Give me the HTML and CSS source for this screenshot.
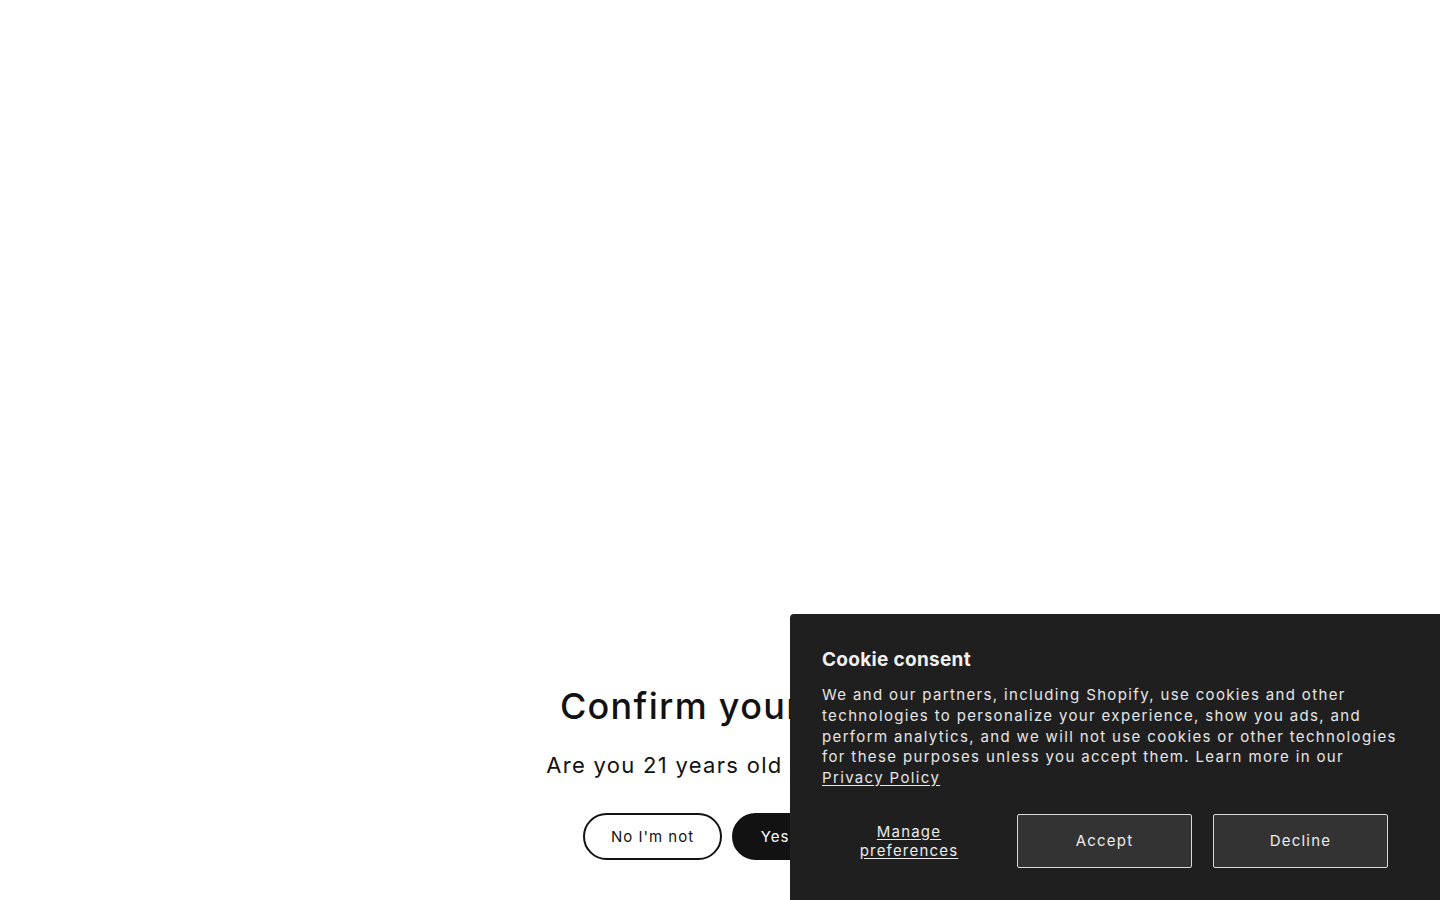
FILE: index.html
```html
<!DOCTYPE html>
<html lang="en">
<head>
<meta charset="utf-8">
<title>Confirm your age</title>
<link rel="stylesheet" href="styles.css">
</head>
<body>
<main class="page">
  <section class="age">
    <h1 class="age-title">Confirm your age</h1>
    <p class="age-text">Are you 21 years old or older?</p>
    <div class="age-actions">
      <button class="pill pill-outline">No I'm not</button>
      <button class="pill pill-solid">Yes I am</button>
    </div>
  </section>
</main>
<aside class="cookie">
  <h2 class="cookie-title">Cookie consent</h2>
  <p class="cookie-text">We and our partners, including Shopify, use cookies and other technologies to personalize your experience, show you ads, and perform analytics, and we will not use cookies or other technologies for these purposes unless you accept them. Learn more in our <a href="#" class="cookie-link">Privacy Policy</a></p>
  <div class="cookie-actions">
    <a href="#" class="manage">Manage<br>preferences</a>
    <button class="cbtn">Accept</button>
    <button class="cbtn">Decline</button>
  </div>
</aside>
</body>
</html>
```
FILE: styles.css
```css
* { box-sizing: border-box; }
html, body { margin: 0; padding: 0; }
body {
  width: 1440px;
  height: 900px;
  overflow: hidden;
  background: #ffffff;
  font-family: Inter, "Liberation Sans", sans-serif;
  color: #121212;
}
.page {
  display: flex;
  justify-content: center;
  padding-top: 682px;
}
.age {
  display: flex;
  flex-direction: column;
  align-items: center;
}
.age-title {
  margin: 0;
  font-size: 36px;
  font-weight: 500;
  line-height: 48px;
  letter-spacing: 1.3px;
}
.age-text {
  margin: 20px 0 0;
  font-size: 22px;
  line-height: 30px;
  letter-spacing: 1.3px;
}
.age-actions {
  display: flex;
  gap: 10px;
  margin-top: 33px;
}
.pill {
  height: 47px;
  border-radius: 24px;
  font-family: inherit;
  font-size: 15px;
  letter-spacing: 1px;
  padding: 0;
  white-space: nowrap;
}
.pill-outline {
  width: 139px;
  background: #fff;
  color: #121212;
  border: 2px solid #121212;
}
.pill-solid {
  width: 125px;
  background: #121212;
  color: #fff;
  border: 2px solid #121212;
}
.cookie {
  position: fixed;
  right: 0;
  bottom: 0;
  width: 650px;
  height: 286px;
  background: #1f1f1f;
  color: #ececec;
  padding: 33px 32px 32px;
  border-radius: 4px 0 0 0;
}
.cookie-title {
  margin: 0;
  font-size: 19px;
  font-weight: 700;
  line-height: 26px;
  letter-spacing: 0.3px;
  color: #f0f0f0;
}
.cookie-text {
  margin: 12px 0 0;
  font-size: 15px;
  line-height: 20.75px;
  letter-spacing: 1.35px;
  color: #e6e6e6;
}
.cookie-link { color: #e6e6e6; text-decoration: underline; text-underline-offset: 2px; }
.cookie-actions {
  display: flex;
  align-items: center;
  gap: 21px;
  margin-top: 25px;
}
.manage {
  width: 174px;
  text-align: center;
  color: #ececec;
  font-size: 15px;
  line-height: 19px;
  letter-spacing: 1.2px;
  text-decoration: underline;
  text-underline-offset: 2px;
}
.cbtn {
  width: 175px;
  height: 54px;
  background: #333333;
  color: #ececec;
  border: 1px solid #d9d9d9;
  border-radius: 2px;
  font-family: inherit;
  font-size: 15px;
  letter-spacing: 1.2px;
}
```
